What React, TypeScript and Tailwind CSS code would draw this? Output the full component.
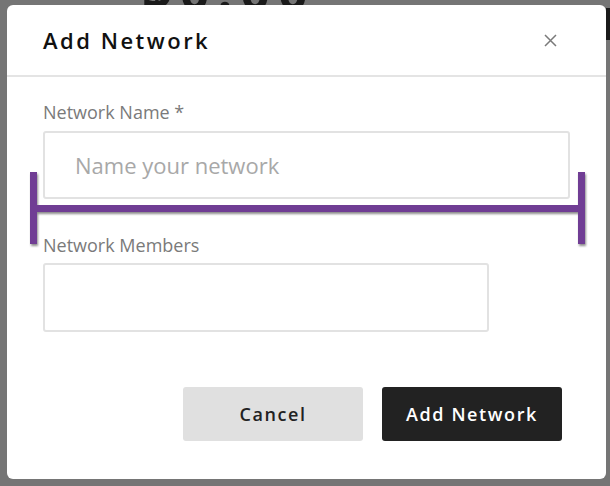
import React from 'react';

const font = { fontFamily: '"Open Sans", "Noto Sans", sans-serif' };

const Bracket = () => (
  <svg
    className="pointer-events-none absolute left-[24px] top-[168px]"
    width="570"
    height="84"
    viewBox="0 0 570 84"
  >
    <defs>
      <filter id="bshadow" x="-5%" y="-20%" width="110%" height="160%">
        <feDropShadow dx="1" dy="2" stdDeviation="1.2" floodColor="#000" floodOpacity="0.45" />
      </filter>
    </defs>
    <g fill="#6f3d94" filter="url(#bshadow)">
      <rect x="6" y="4" width="7" height="72" />
      <rect x="6" y="37" width="555" height="7" />
      <rect x="554" y="4" width="7" height="72" />
    </g>
  </svg>
);

export default function App() {
  return (
    <div className="relative h-[486px] w-[610px] overflow-hidden bg-[#757575]" style={font}>
      {/* page behind the overlay, only its edge shows */}
      <div className="absolute left-[142px] top-0 h-[6px] w-[200px] overflow-hidden">
        <div className="-mt-[30px] text-[52px] font-bold leading-[40px] tracking-[8px] text-[#1a1a1a]">$0.00</div>
      </div>
      <div className="absolute right-0 top-[8px] h-[32px] w-[4px] bg-[#1a1a1a]" />

      {/* modal */}
      <div className="absolute left-[7px] top-[5px] flex h-[474px] w-[599px] flex-col rounded-[6px] bg-white">
        <div className="flex h-[72px] items-center justify-between border-b-2 border-[#e4e4e4] pl-[36px] pr-[49px]">
          <h2 className="pt-[1px] text-[22px] font-semibold tracking-[2.5px] text-[#111]">Add Network</h2>
          <button className="flex h-[14px] w-[14px] items-center justify-center text-[#7a7a7a]">
            <svg width="13" height="13" viewBox="0 0 13 13" stroke="currentColor" strokeWidth="1.5">
              <path d="M1 1 L12 12 M12 1 L1 12" />
            </svg>
          </button>
        </div>

        <div className="flex flex-1 flex-col px-[36px] pt-[22px]">
          <label className="text-[18px] leading-[26px] text-[#7a7a7a]">Network Name *</label>
          <input
            className="mt-[6px] h-[68px] w-[527px] rounded-[3px] border-2 border-[#e2e2e2] px-[30px] text-[22px] text-[#333] outline-none placeholder:text-[#a8a8a8]"
            placeholder="Name your network"
          />

          <label className="mt-[33px] text-[18px] leading-[26px] text-[#7a7a7a]">Network Members</label>
          <input className="mt-[5px] h-[69px] w-[446px] rounded-[3px] border-2 border-[#e2e2e2] px-[30px] text-[20px] outline-none" />

          <div className="mt-[55px] flex justify-end gap-[19px] pr-[8px]">
            <button className="h-[54px] w-[180px] rounded-[3px] bg-[#e0e0e0] text-[18px] font-semibold tracking-[1.6px] text-[#222]">
              Cancel
            </button>
            <button className="h-[54px] w-[180px] rounded-[3px] bg-[#222] text-[18px] font-semibold tracking-[1.6px] text-white">
              Add Network
            </button>
          </div>
        </div>
      </div>

      <Bracket />
    </div>
  );
}
